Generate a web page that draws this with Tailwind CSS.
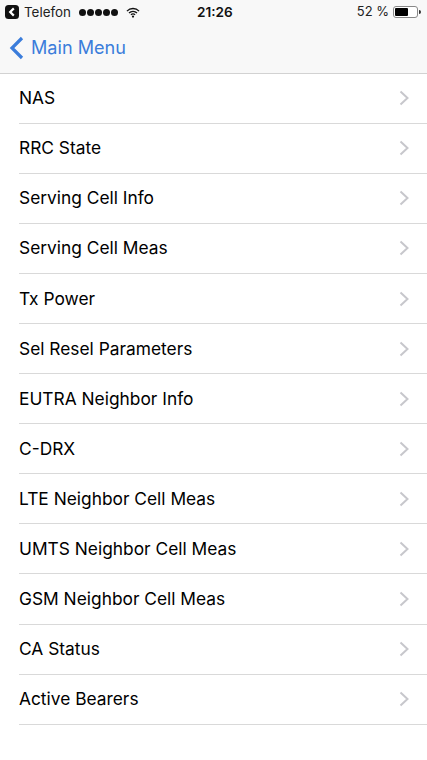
<!DOCTYPE html>
<html><head><meta charset="utf-8">
<script src="https://cdn.jsdelivr.net/npm/@tailwindcss/browser@4"></script>
</head>
<body class="bg-white font-['Inter','Liberation_Sans',Arial,sans-serif]">
<div class="w-[427px] h-[760px] overflow-hidden bg-white flex flex-col text-black">
  <header class="h-[74px] shrink-0 bg-[#f8f8f8] border-b border-[#d2d2d2] flex flex-col">
    <div class="relative h-[24px] shrink-0 flex items-center pl-[5px] pr-[6px] text-[13.4px] text-[#222]">
      <svg width="14" height="14" viewBox="0 0 14 14" class="mr-[5px]"><rect x="0" y="0" width="14" height="14" rx="3.5" fill="#111"/><path d="M8.8 3.4 L5.2 7 L8.8 10.6" fill="none" stroke="#fff" stroke-width="2.2"/></svg>
      <span>Telefon</span>
      <div class="flex gap-[1px] ml-[8px]">
        <i class="block w-[7px] h-[7px] rounded-full bg-[#111]"></i><i class="block w-[7px] h-[7px] rounded-full bg-[#111]"></i><i class="block w-[7px] h-[7px] rounded-full bg-[#111]"></i><i class="block w-[7px] h-[7px] rounded-full bg-[#111]"></i><i class="block w-[7px] h-[7px] rounded-full bg-[#111]"></i>
      </div>
      <svg width="14" height="11" viewBox="0 0 15 11" class="ml-[8px]"><path d="M1 4 A9 9 0 0 1 14 4 M3.2 6.1 A6 6 0 0 1 11.8 6.1 M5.3 8 A3 3 0 0 1 9.7 8" fill="none" stroke="#111" stroke-width="1.4"/><circle cx="7.5" cy="9.8" r="1.2" fill="#111"/></svg>
      <span class="absolute left-[197px] text-[13.6px] font-semibold text-[#111]">21:26</span>
      <span class="ml-auto mr-[4px] text-[13px]">52 %</span>
      <svg width="28" height="12" viewBox="0 0 28 12"><rect x="0.5" y="0.5" width="24" height="11" rx="2.5" fill="#fff" stroke="#888"/><rect x="2" y="2" width="13" height="8" rx="1" fill="#000"/><path d="M26 4 A2 2 0 0 1 26 8 Z" fill="#333"/></svg>
    </div>
    <div class="flex-1 flex items-center text-[#3b7ddb]">
      <svg width="16" height="24" viewBox="0 0 16 24" class="ml-[9px] mr-[6px] -translate-y-[1px]"><path d="M13 2 L3 12 L13 22" fill="none" stroke="#3b7ddb" stroke-width="3.2"/></svg>
      <span class="text-[18.1px] leading-none -translate-y-[1px]">Main Menu</span>
    </div>
  </header>
  <ul class="-mt-[0.3px] pl-[19px] text-[17.35px]">
    <li class="h-[50.08px] flex items-center justify-between border-b border-[#d9d9d9] pr-[17px]"><span>NAS</span><svg width="11" height="16" viewBox="0 0 11 16"><path d="M1.5 1.5 L8.5 8 L1.5 14.5" fill="none" stroke="#c7c7cc" stroke-width="2"/></svg></li>
    <li class="h-[50.08px] flex items-center justify-between border-b border-[#d9d9d9] pr-[17px]"><span>RRC State</span><svg width="11" height="16" viewBox="0 0 11 16"><path d="M1.5 1.5 L8.5 8 L1.5 14.5" fill="none" stroke="#c7c7cc" stroke-width="2"/></svg></li>
    <li class="h-[50.08px] flex items-center justify-between border-b border-[#d9d9d9] pr-[17px]"><span>Serving Cell Info</span><svg width="11" height="16" viewBox="0 0 11 16"><path d="M1.5 1.5 L8.5 8 L1.5 14.5" fill="none" stroke="#c7c7cc" stroke-width="2"/></svg></li>
    <li class="h-[50.08px] flex items-center justify-between border-b border-[#d9d9d9] pr-[17px]"><span>Serving Cell Meas</span><svg width="11" height="16" viewBox="0 0 11 16"><path d="M1.5 1.5 L8.5 8 L1.5 14.5" fill="none" stroke="#c7c7cc" stroke-width="2"/></svg></li>
    <li class="h-[50.08px] flex items-center justify-between border-b border-[#d9d9d9] pr-[17px]"><span>Tx Power</span><svg width="11" height="16" viewBox="0 0 11 16"><path d="M1.5 1.5 L8.5 8 L1.5 14.5" fill="none" stroke="#c7c7cc" stroke-width="2"/></svg></li>
    <li class="h-[50.08px] flex items-center justify-between border-b border-[#d9d9d9] pr-[17px]"><span>Sel Resel Parameters</span><svg width="11" height="16" viewBox="0 0 11 16"><path d="M1.5 1.5 L8.5 8 L1.5 14.5" fill="none" stroke="#c7c7cc" stroke-width="2"/></svg></li>
    <li class="h-[50.08px] flex items-center justify-between border-b border-[#d9d9d9] pr-[17px]"><span>EUTRA Neighbor Info</span><svg width="11" height="16" viewBox="0 0 11 16"><path d="M1.5 1.5 L8.5 8 L1.5 14.5" fill="none" stroke="#c7c7cc" stroke-width="2"/></svg></li>
    <li class="h-[50.08px] flex items-center justify-between border-b border-[#d9d9d9] pr-[17px]"><span>C-DRX</span><svg width="11" height="16" viewBox="0 0 11 16"><path d="M1.5 1.5 L8.5 8 L1.5 14.5" fill="none" stroke="#c7c7cc" stroke-width="2"/></svg></li>
    <li class="h-[50.08px] flex items-center justify-between border-b border-[#d9d9d9] pr-[17px]"><span>LTE Neighbor Cell Meas</span><svg width="11" height="16" viewBox="0 0 11 16"><path d="M1.5 1.5 L8.5 8 L1.5 14.5" fill="none" stroke="#c7c7cc" stroke-width="2"/></svg></li>
    <li class="h-[50.08px] flex items-center justify-between border-b border-[#d9d9d9] pr-[17px]"><span>UMTS Neighbor Cell Meas</span><svg width="11" height="16" viewBox="0 0 11 16"><path d="M1.5 1.5 L8.5 8 L1.5 14.5" fill="none" stroke="#c7c7cc" stroke-width="2"/></svg></li>
    <li class="h-[50.08px] flex items-center justify-between border-b border-[#d9d9d9] pr-[17px]"><span>GSM Neighbor Cell Meas</span><svg width="11" height="16" viewBox="0 0 11 16"><path d="M1.5 1.5 L8.5 8 L1.5 14.5" fill="none" stroke="#c7c7cc" stroke-width="2"/></svg></li>
    <li class="h-[50.08px] flex items-center justify-between border-b border-[#d9d9d9] pr-[17px]"><span>CA Status</span><svg width="11" height="16" viewBox="0 0 11 16"><path d="M1.5 1.5 L8.5 8 L1.5 14.5" fill="none" stroke="#c7c7cc" stroke-width="2"/></svg></li>
    <li class="h-[50.08px] flex items-center justify-between border-b border-[#d9d9d9] pr-[17px]"><span>Active Bearers</span><svg width="11" height="16" viewBox="0 0 11 16"><path d="M1.5 1.5 L8.5 8 L1.5 14.5" fill="none" stroke="#c7c7cc" stroke-width="2"/></svg></li>
  </ul>
</div>
</body></html>
